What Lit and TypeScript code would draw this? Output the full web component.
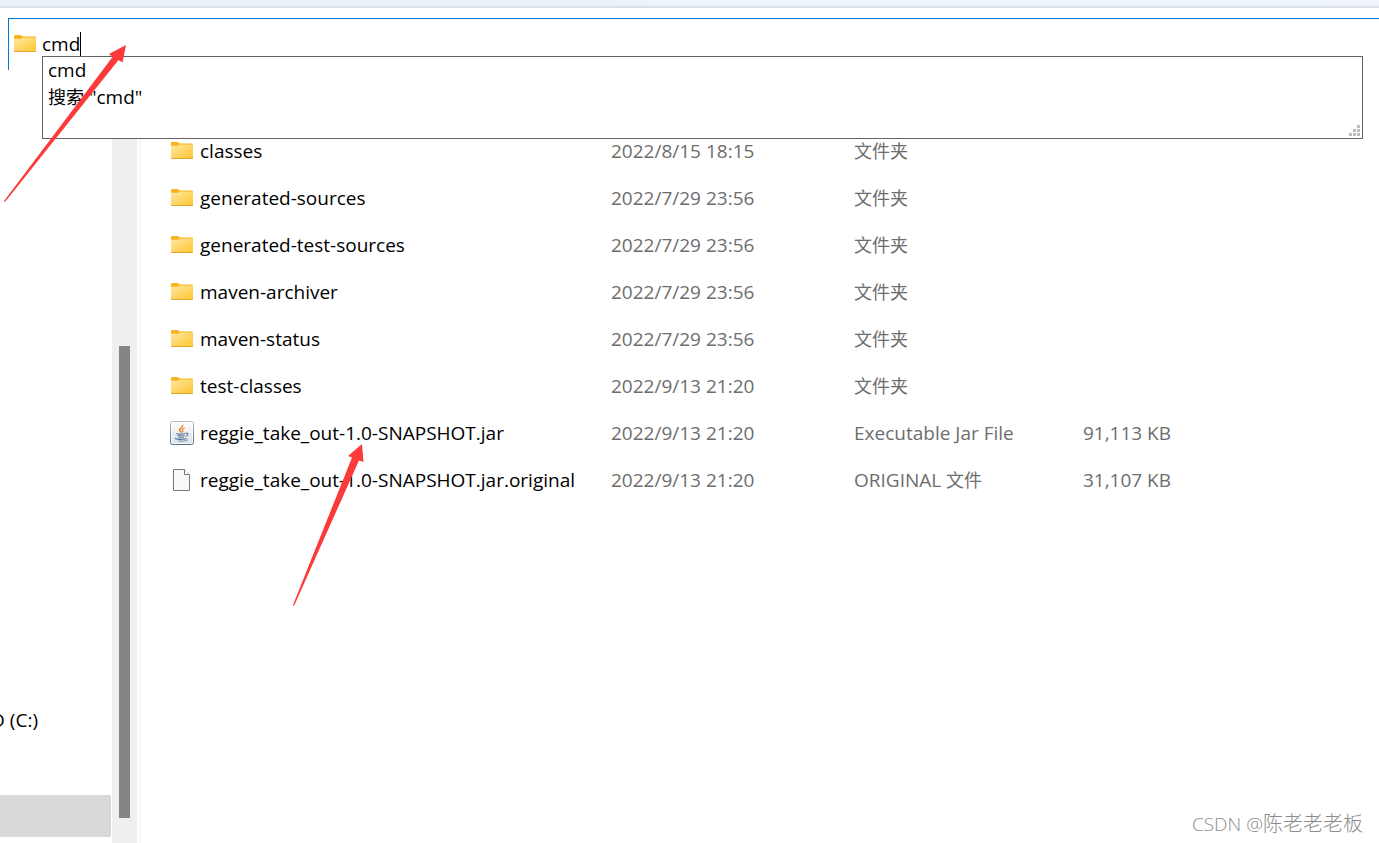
import { LitElement, html, css, svg } from "lit";
import { customElement, property, state } from "lit/decorators.js";

type Kind = "folder" | "jar" | "file";

interface Entry {
  kind: Kind;
  name: string;
  modified: string;
  type: string;
  typeZh: string;
  size: string;
}

const folder = (name: string, modified: string): Entry => ({
  kind: "folder",
  name,
  modified,
  type: "",
  typeZh: "文件夹",
  size: "",
});

const ENTRIES: Entry[] = [
  folder("classes", "2022/8/15 18:15"),
  folder("generated-sources", "2022/7/29 23:56"),
  folder("generated-test-sources", "2022/7/29 23:56"),
  folder("maven-archiver", "2022/7/29 23:56"),
  folder("maven-status", "2022/7/29 23:56"),
  folder("test-classes", "2022/9/13 21:20"),
  {
    kind: "jar",
    name: "reggie_take_out-1.0-SNAPSHOT.jar",
    modified: "2022/9/13 21:20",
    type: "Executable Jar File",
    typeZh: "",
    size: "91,113 KB",
  },
  {
    kind: "file",
    name: "reggie_take_out-1.0-SNAPSHOT.jar.original",
    modified: "2022/9/13 21:20",
    type: "ORIGINAL ",
    typeZh: "文件",
    size: "31,107 KB",
  },
];

@customElement("entry-icon")
export class EntryIcon extends LitElement {
  @property() kind: Kind = "folder";

  static styles = css`
    :host {
      display: block;
      width: 24px;
      height: 24px;
    }
    .glyph {
      display: block;
    }
  `;

  private shape() {
    if (this.kind === "folder") {
      return svg`
        <defs>
          <linearGradient id="body" x1="0" y1="0" x2="1" y2="1">
            <stop offset="0" stop-color="#ffe8a2"></stop>
            <stop offset="1" stop-color="#fdc632"></stop>
          </linearGradient>
        </defs>
        <path d="M1 4.2Q1 3 2.2 3H7.2Q8 3 8.5 3.6L9.6 4.6H21.8Q23 4.6 23 5.6V10H1Z" fill="#f7b41c"></path>
        <path d="M1 6.8H8.2L9.6 5.5H23V19.2H1Z" fill="url(#body)"></path>
        <path d="M1 19H23V19.3Q23 20 22.2 20H1.8Q1 20 1 19.3Z" fill="#e2a42c"></path>
      `;
    }
    if (this.kind === "jar") {
      return svg`
        <defs>
          <linearGradient id="tile" x1="0" y1="0" x2="0" y2="1">
            <stop offset="0" stop-color="#ffffff"></stop>
            <stop offset="1" stop-color="#d9e0e6"></stop>
          </linearGradient>
          <linearGradient id="rim" x1="0" y1="0" x2="0" y2="1">
            <stop offset="0" stop-color="#b0bbc5"></stop>
            <stop offset="1" stop-color="#536f89"></stop>
          </linearGradient>
        </defs>
        <rect x="0.5" y="0.5" width="23" height="23" rx="2" fill="url(#tile)" stroke="url(#rim)"></rect>
        <rect x="1.5" y="1.5" width="21" height="21" rx="1" fill="none" stroke="#ffffff" stroke-opacity="0.7"></rect>
        <path d="M12.6 4C13.8 6.2 9 7.2 9.6 9.2C9.8 10 10.8 10.6 11.1 11.6" fill="none" stroke="#ee7d1e" stroke-width="1.6"></path>
        <path d="M14.8 7C12.6 7.8 11.8 8.8 12.6 9.6C13 10.2 13 10.8 12.3 11.6" fill="none" stroke="#ee7d1e" stroke-width="1.2"></path>
        <g fill="none" stroke="#55789a" stroke-width="1.1">
          <path d="M7.2 12.2C5.2 13.2 10.6 13.6 15.4 12.5"></path>
          <path d="M15.6 12.2C18.8 11.6 18.6 14.6 15.4 15.2"></path>
          <path d="M7.6 14.3C8.2 15 13 15 14.6 14.5"></path>
          <path d="M8.4 16.2C9.2 17 12.4 16.9 14 16.5"></path>
          <path d="M6.4 17C2.6 18.2 11.8 19.2 16.6 17.5"></path>
          <path d="M8.4 19.9C12 20.4 16.4 20 17.8 18.7" stroke-opacity="0.7"></path>
        </g>
      `;
    }
    return svg`
      <path d="M3.5 1.5H14.2L19.5 6.8V22.5H3.5Z" fill="#f9f9f9" stroke="#777777"></path>
      <path d="M14.5 1.5V6.5H19.5" fill="#ffffff" stroke="#777777"></path>
    `;
  }

  render() {
    return html`<svg class="glyph" width="24" height="24" viewBox="0 0 24 24" aria-hidden="true">${this.shape()}</svg>`;
  }
}

@customElement("address-bar")
export class AddressBar extends LitElement {
  @state() private text = "cmd";

  static styles = css`
    :host {
      display: block;
      position: relative;
      z-index: 1;
      margin: 10px 0 0 8px;
      font-size: 19px;
    }
    .field {
      display: flex;
      align-items: flex-end;
      height: 51px;
      box-sizing: content-box;
      border-top: 1px solid #0078d4;
      border-left: 1px solid #0078d4;
    }
    .icon {
      margin: 0 5px 14px 4px;
    }
    .label {
      display: flex;
      flex: 1;
      margin-bottom: 14px;
      height: 24px;
    }
    .input {
      field-sizing: content;
      height: 24px;
      padding: 0;
      border: 0;
      outline: 0;
      background: none;
      color: #000;
      font: inherit;
      line-height: 24px;
    }
    .caret {
      width: 1px;
      background: #000;
    }
    .menu {
      position: absolute;
      top: 38px;
      left: 34px;
      right: 16px;
      height: 83px;
      box-sizing: border-box;
      border: 1px solid #636363;
      background: #fff;
    }
    .list {
      margin: 0;
      padding: 0;
      list-style: none;
    }
    .option {
      height: 27px;
      padding-left: 5px;
      line-height: 27px;
      white-space: pre;
    }
    .zh {
      font-size: 18px;
    }
    .grip {
      position: absolute;
      right: 2px;
      bottom: 2px;
      display: block;
    }
  `;

  render() {
    return html`
      <div class="field">
        <entry-icon class="icon" kind="folder"></entry-icon>
        <label class="label">
          <input
            class="input"
            type="text"
            aria-label="地址"
            spellcheck="false"
            .value=${this.text}
            @input=${(e: Event) => (this.text = (e.target as HTMLInputElement).value)}
          />
          <span class="caret"></span>
        </label>
      </div>
      <div class="menu">
        <ul class="list" role="listbox" aria-label="建议">
          <li class="option" role="option">${this.text}</li>
          <li class="option" role="option"><span class="zh">搜索</span> "${this.text}"</li>
        </ul>
        <svg class="grip" width="11" height="11" viewBox="0 0 11 11" fill="#bdbdbd" aria-hidden="true">
          <path d="M8 0h3v3h-3zM4 4h3v3h-3zM8 4h3v3h-3zM0 8h3v3h-3zM4 8h3v3h-3zM8 8h3v3h-3z"></path>
        </svg>
      </div>
    `;
  }
}

@customElement("nav-pane")
export class NavPane extends LitElement {
  static styles = css`
    :host {
      display: grid;
      grid-template-columns: 112px 25px 2px;
      font-size: 19px;
    }
    .tree {
      display: flex;
      flex-direction: column;
      justify-content: flex-end;
      gap: 54px;
      padding: 0 1px 6px 0;
      overflow: hidden;
    }
    .node {
      display: flex;
      justify-content: flex-end;
      align-items: center;
      height: 42px;
      padding: 0 73px 0 0;
      border: 0;
      border-radius: 0 2px 2px 0;
      background: none;
      color: #000;
      font: inherit;
      white-space: nowrap;
    }
    .selected {
      background: #d9d9d9;
    }
    .track {
      display: grid;
      grid-template-rows: 276fr 472fr 25fr;
      justify-content: center;
      background: #efefef;
    }
    .thumb {
      grid-row: 2;
      width: 11px;
      background: #858585;
    }
    .divider {
      margin-left: 2px;
      width: 2px;
      background: #f7f7f7;
    }
  `;

  render() {
    return html`
      <nav class="tree" aria-label="导航窗格">
        <button class="node" type="button">D (C:)</button>
        <button class="node selected" type="button" aria-label="当前位置"></button>
      </nav>
      <div class="track"><div class="thumb"></div></div>
      <div class="divider"></div>
    `;
  }
}

@customElement("file-list")
export class FileList extends LitElement {
  static styles = css`
    :host {
      display: block;
      padding: 57px 0 0 31px;
    }
    .table {
      width: 100%;
      border-collapse: collapse;
      table-layout: fixed;
    }
    .c-name {
      width: 441px;
    }
    .c-date {
      width: 243px;
    }
    .c-type {
      width: 217px;
    }
    .c-size {
      width: 100px;
    }
    .cell {
      height: 47px;
      padding: 0;
      color: #6d6d6d;
      font-size: 19px;
      line-height: 24px;
      text-align: left;
      white-space: nowrap;
    }
    .name {
      display: flex;
      align-items: center;
      gap: 6px;
      color: #000;
    }
    .zh {
      font-size: 18px;
    }
    .size {
      text-align: right;
    }
  `;

  render() {
    return html`
      <table class="table" aria-label="文件">
        <colgroup>
          <col class="c-name" />
          <col class="c-date" />
          <col class="c-type" />
          <col class="c-size" />
          <col />
        </colgroup>
        <tbody>
          ${ENTRIES.map(
            (e) => html`
              <tr>
                <td class="cell"><div class="name"><entry-icon kind=${e.kind}></entry-icon>${e.name}</div></td>
                <td class="cell">${e.modified}</td>
                <td class="cell">${e.type}<span class="zh">${e.typeZh}</span></td>
                <td class="cell size">${e.size}</td>
                <td class="cell"></td>
              </tr>
            `
          )}
        </tbody>
      </table>
    `;
  }
}

@customElement("app-root")
export class AppRoot extends LitElement {
  static styles = css`
    :host {
      position: relative;
      display: flex;
      flex-direction: column;
      min-height: 100vh;
      overflow: hidden;
      background: #fff;
      color: #000;
      font-family: "Open Sans", "Noto Sans CJK SC", sans-serif;
    }
    .strip {
      height: 6px;
      border-bottom: 2px solid #dbe2e3;
      background: linear-gradient(90deg, #eaf4f8, #eef3fc);
    }
    .panes {
      display: grid;
      grid-template-columns: auto 1fr;
      flex: 1;
    }
    .marks {
      position: absolute;
      top: 0;
      left: 0;
      z-index: 2;
      pointer-events: none;
    }
    .credit {
      position: absolute;
      right: 16px;
      bottom: 4px;
      color: #8c8c8c;
      font-size: 19px;
      font-weight: 300;
      line-height: 30px;
    }
    .author {
      font-size: 20px;
    }
  `;

  render() {
    return html`
      <div class="strip"></div>
      <address-bar></address-bar>
      <main class="panes">
        <nav-pane></nav-pane>
        <file-list></file-list>
      </main>
      <svg class="marks" width="400" height="620" viewBox="0 0 400 620" fill="#fc3a39" aria-hidden="true">
        <path d="M126 45L109 54L112.5 57L4 201L5 202L118.5 60L122.5 62.5Z"></path>
        <path d="M362 444L348 456L352 457.5L293 605L294 606L359 460.5L363.5 462Z"></path>
      </svg>
      <div class="credit">CSDN @<span class="author">陈老老老板</span></div>
    `;
  }
}
